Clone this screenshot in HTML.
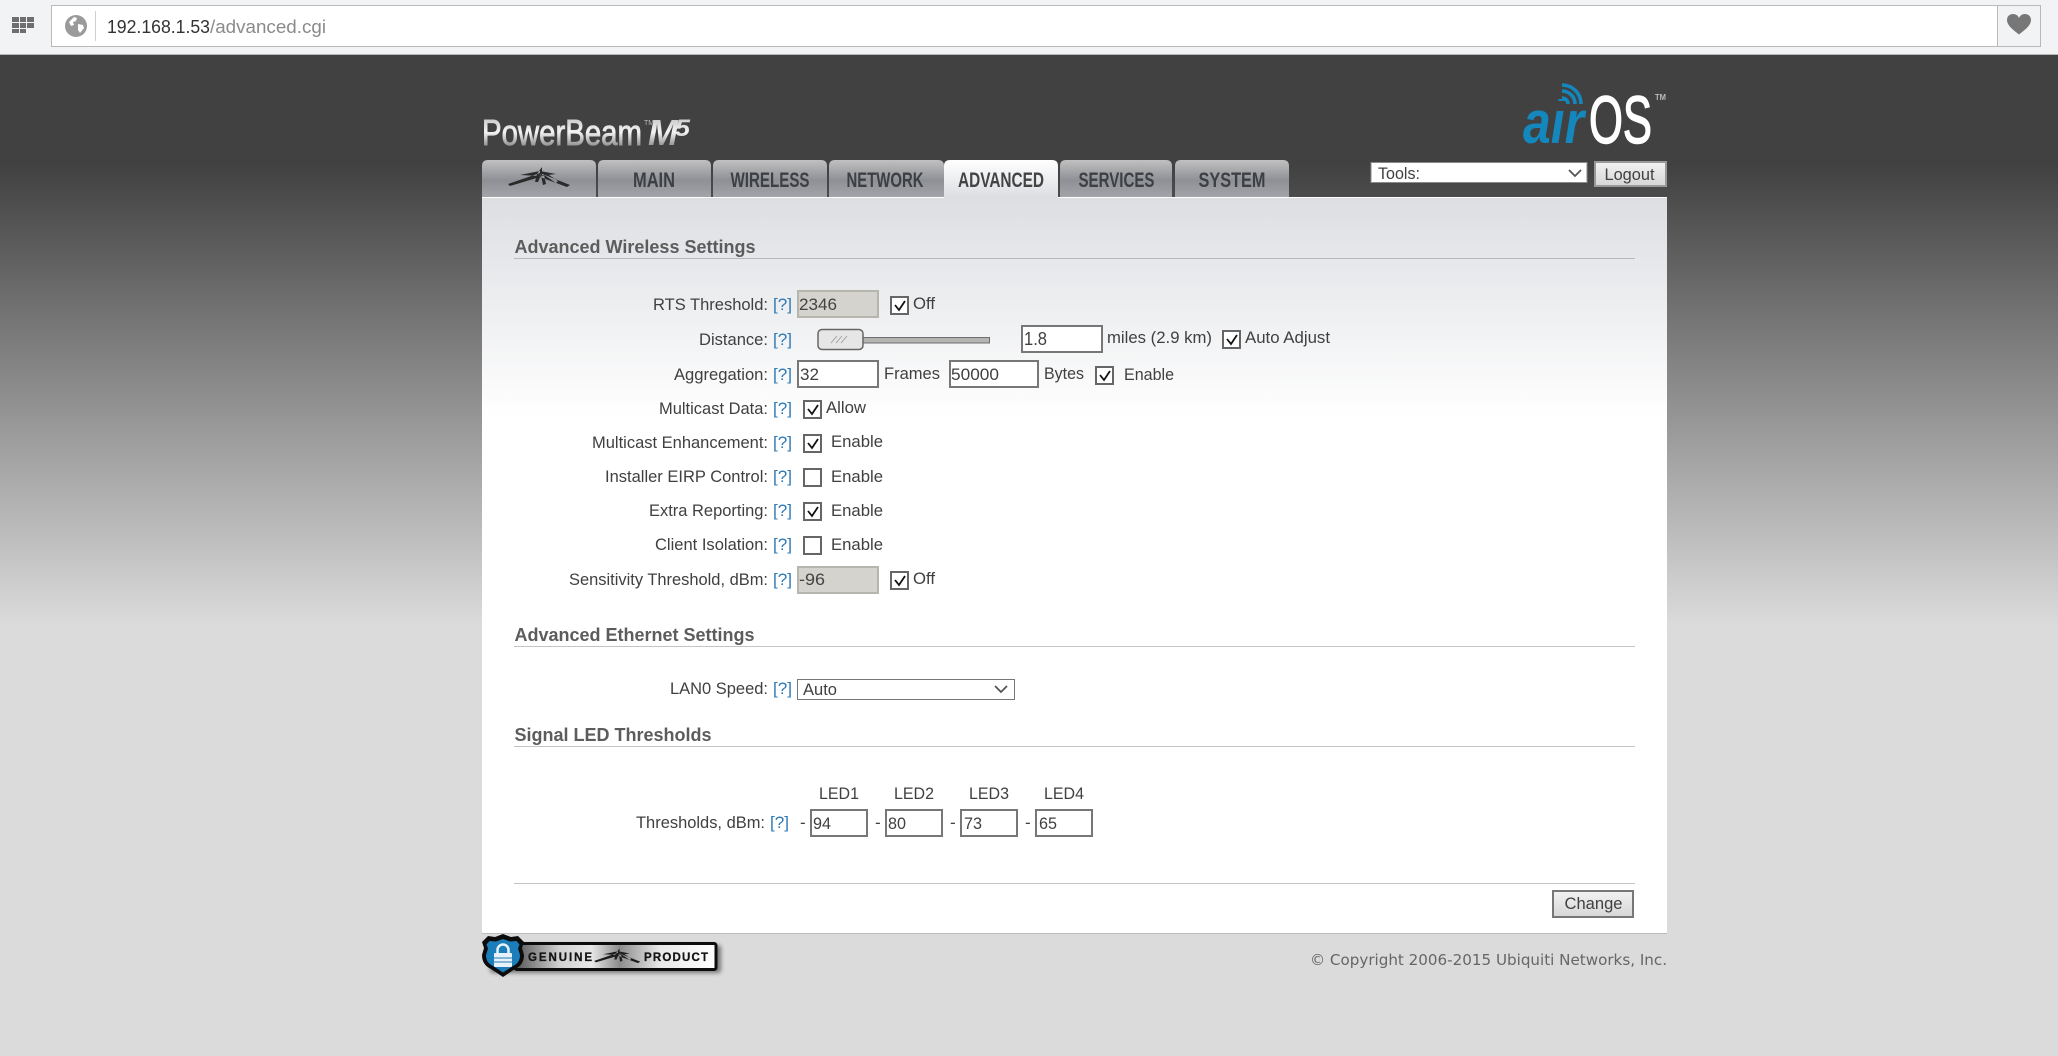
<!DOCTYPE html>
<html lang="en"><head><meta charset="utf-8"><title>advanced.cgi</title>
<style>
html,body{margin:0;padding:0;width:2058px;height:1056px;overflow:hidden;background:#dbdbdb}
svg{display:block}
text{font-family:"Liberation Sans",sans-serif;font-size:17px;fill:#404040}
.h{font-weight:bold;font-size:18px;fill:#5c5c5c}
.q{fill:#2f7ab5}
.t{font-size:21px;font-weight:bold;fill:#3c3f43;text-anchor:middle}
.i{fill:#fff;stroke:#777;stroke-width:2}
.d{fill:#d4d3ce;stroke:#b6b6ae;stroke-width:2}
.c{fill:#fff;stroke:#666;stroke-width:2}
.k{fill:none;stroke:#111;stroke-width:1.800}
.l{stroke:#8a8a8a;stroke-width:1;stroke-dasharray:1 1}
</style></head><body>
<svg xmlns="http://www.w3.org/2000/svg" width="2058" height="1056" viewBox="0 0 2058 1056">
<defs>
<linearGradient id="bg" x1="0" y1="0" x2="0" y2="1"><stop offset="0" stop-color="#414141"/><stop offset=".11" stop-color="#414141"/><stop offset=".57" stop-color="#dbdbdb"/><stop offset="1" stop-color="#dbdbdb"/></linearGradient>
<linearGradient id="pn" x1="0" y1="197" x2="0" y2="933" gradientUnits="userSpaceOnUse"><stop offset="0" stop-color="#dcdee2"/><stop offset=".3" stop-color="#ffffff"/><stop offset="1" stop-color="#ffffff"/></linearGradient>
<linearGradient id="tb" x1="0" y1="0" x2="0" y2="1"><stop offset="0" stop-color="#c0c0c0"/><stop offset=".55" stop-color="#8e9096"/><stop offset="1" stop-color="#a2a4aa"/></linearGradient>
<linearGradient id="ta" x1="0" y1="0" x2="0" y2="1"><stop offset="0" stop-color="#ffffff"/><stop offset="1" stop-color="#dcdee2"/></linearGradient>
<linearGradient id="pb" x1="0" y1="118" x2="0" y2="146" gradientUnits="userSpaceOnUse"><stop offset="0" stop-color="#c8c8c8"/><stop offset=".5" stop-color="#f4f4f4"/><stop offset="1" stop-color="#909090"/></linearGradient>
<linearGradient id="mt" x1="0" y1="0" x2="1" y2="0"><stop offset="0" stop-color="#555"/><stop offset=".22" stop-color="#d0d0d0"/><stop offset=".38" stop-color="#e8e8e8"/><stop offset=".52" stop-color="#8c8c8c"/><stop offset=".72" stop-color="#e8e8e8"/><stop offset="1" stop-color="#fff"/></linearGradient>
<linearGradient id="bt" x1="0" y1="0" x2="0" y2="1"><stop offset="0" stop-color="#f2f2f2"/><stop offset="1" stop-color="#d6d6d6"/></linearGradient>
<filter id="sh" x="-10%" y="-20%" width="120%" height="150%"><feGaussianBlur stdDeviation="2"/></filter>
</defs>

<!-- browser bar -->
<rect width="2058" height="55" fill="#f2f3f5"/>
<rect y="54" width="2058" height="1" fill="#b5b5b5"/>
<g fill="#6e6e6e">
<rect x="12" y="17" width="7" height="5"/><rect x="20" y="17" width="6" height="5"/><rect x="27" y="17" width="7" height="5"/>
<rect x="12" y="23" width="7" height="5"/><rect x="20" y="23" width="6" height="5"/><rect x="27" y="23" width="7" height="5"/>
<rect x="12" y="29" width="7" height="4"/><rect x="20" y="29" width="6" height="4"/>
</g>
<rect x="51.500" y="5.500" width="1989" height="41" fill="#fff" stroke="#b9b9b9"/>
<rect x="1997.500" y="5.500" width="43" height="41" fill="#f2f3f5" stroke="#b9b9b9"/>
<circle cx="76" cy="26" r="11" fill="#9a9a9a"/>
<path d="M69 22l5-5 3 1-1 3-3 1 1 3-3 1zM78 24l5 1 1 3-4 5-2-3z" fill="#fff"/>
<rect x="95" y="11" width="1" height="30" fill="#cfcfcf"/>
<text x="107" y="33" style="font-size:18.500px;fill:#333" textLength="103" lengthAdjust="spacingAndGlyphs">192.168.1.53</text>
<text x="210" y="33" style="font-size:18.500px;fill:#8a8a8a" textLength="116" lengthAdjust="spacingAndGlyphs">/advanced.cgi</text>
<path d="M2019 34.500C2012 29 2007 25 2007 20C2007 16 2010 14 2013 14C2016 14 2018 15.500 2019 18C2020 15.500 2022 14 2025 14C2028 14 2031 16 2031 20C2031 25 2026 29 2019 34.500Z" fill="#777"/>

<!-- page bg -->
<rect y="55" width="2058" height="1001" fill="url(#bg)"/>

<!-- logos -->
<text x="482" y="145" style="font-size:36px;fill:url(#pb);stroke:url(#pb);stroke-width:.9" textLength="160" lengthAdjust="spacingAndGlyphs">PowerBeam</text>
<text x="644" y="125" style="font-size:7px;fill:#bbb">TM</text>
<text x="648" y="145" style="font-size:36px;font-weight:bold;font-style:italic;fill:url(#pb)" textLength="30" lengthAdjust="spacingAndGlyphs">M</text>
<text x="675" y="136" style="font-size:24px;font-weight:bold;font-style:italic;fill:url(#pb)" textLength="15" lengthAdjust="spacingAndGlyphs">5</text>

<text x="1523" y="143" style="font-size:60px;font-style:italic;font-weight:bold;fill:#1487bd" textLength="61" lengthAdjust="spacingAndGlyphs">air</text>
<rect x="1556" y="101" width="14" height="10" fill="#414141"/>
<g fill="none" stroke="#1487bd" stroke-width="3.600">
<path d="M1562 98a6 6 0 0 1 6 6"/><path d="M1562 91a13 13 0 0 1 13 13"/><path d="M1562 85a19 19 0 0 1 19 19"/>
</g>
<text x="1589" y="143" style="font-size:67px;fill:#fff;stroke:#fff;stroke-width:1.500" textLength="63" lengthAdjust="spacingAndGlyphs">OS</text>
<text x="1655" y="100" style="font-size:8px;font-weight:bold;fill:#bdbdbd" textLength="11" lengthAdjust="spacingAndGlyphs">TM</text>

<!-- tabs -->
<g>
<path d="M482 197V166q0-6 6-6h102q6 0 6 6v31z" fill="url(#tb)"/>
<path d="M598 197V166q0-6 6-6h101q6 0 6 6v31z" fill="url(#tb)"/>
<path d="M713 197V166q0-6 6-6h102q6 0 6 6v31z" fill="url(#tb)"/>
<path d="M829 197V166q0-6 6-6h103q6 0 6 6v31z" fill="url(#tb)"/>
<path d="M944 197V166q0-6 6-6h102q6 0 6 6v31z" fill="url(#ta)"/>
<path d="M1060 197V166q0-6 6-6h100q6 0 6 6v31z" fill="url(#tb)"/>
<path d="M1175 197V166q0-6 6-6h102q6 0 6 6v31z" fill="url(#tb)"/>
</g>
<path d="M540 173L508 184L510 186L540 177ZM540 173L570 185L567 187L540 177ZM520 175L540 171L540 176ZM556 174L540 171L540 176ZM542 167L537 174L542 175ZM537 174L535 182L538 182L541 175ZM541 175L543 185L546 184L544 175ZM543 174L556 183L558 181L546 173Z" fill="#2a2a2a"/>
<text class="t" x="654" y="187" textLength="42" lengthAdjust="spacingAndGlyphs">MAIN</text>
<text class="t" x="770" y="187" textLength="79" lengthAdjust="spacingAndGlyphs">WIRELESS</text>
<text class="t" x="885" y="187" textLength="77" lengthAdjust="spacingAndGlyphs">NETWORK</text>
<text class="t" x="1001" y="187" textLength="86" lengthAdjust="spacingAndGlyphs" style="fill:#444">ADVANCED</text>
<text class="t" x="1116.500" y="187" textLength="76" lengthAdjust="spacingAndGlyphs">SERVICES</text>
<text class="t" x="1232" y="187" textLength="67" lengthAdjust="spacingAndGlyphs">SYSTEM</text>

<!-- tools -->
<rect x="1371" y="162.500" width="216" height="20" fill="#fff" stroke="#8a8a8a"/>
<text x="1378" y="179" textLength="42" lengthAdjust="spacingAndGlyphs">Tools:</text>
<path d="M1569 170l6 6 6-6" fill="none" stroke="#555" stroke-width="1.800"/>
<rect x="1595" y="162" width="71" height="24" fill="url(#bt)" stroke="#999" stroke-width="2"/>
<text x="1629.500" y="180" text-anchor="middle" textLength="50" lengthAdjust="spacingAndGlyphs">Logout</text>

<!-- panel -->
<rect x="482" y="197" width="1185" height="736" fill="url(#pn)"/>
<rect x="482" y="197" width="462" height="1" fill="#fff"/><rect x="1058" y="197" width="609" height="1" fill="#fff"/>
<rect x="482" y="933" width="1185" height="1" fill="#bcbcbc"/>

<text class="h" x="514.500" y="253" textLength="241" lengthAdjust="spacingAndGlyphs">Advanced Wireless Settings</text>
<line class="l" x1="514.500" y1="258.500" x2="1635" y2="258.500"/>

<!-- RTS -->
<text x="768" y="310" text-anchor="end" textLength="115" lengthAdjust="spacingAndGlyphs">RTS Threshold:</text>
<text class="q" x="773" y="310" textLength="19" lengthAdjust="spacingAndGlyphs">[?]</text>
<rect class="d" x="798" y="291" width="80" height="26"/>
<text x="799" y="310" style="fill:#444" textLength="38" lengthAdjust="spacingAndGlyphs">2346</text>
<rect class="c" x="891" y="297" width="17" height="17"/><path class="k" d="M895 305l4 5 6-9"/>
<text x="913" y="309" textLength="22" lengthAdjust="spacingAndGlyphs">Off</text>

<!-- Distance -->
<text x="768" y="345" text-anchor="end" textLength="69" lengthAdjust="spacingAndGlyphs">Distance:</text>
<text class="q" x="773" y="345" textLength="19" lengthAdjust="spacingAndGlyphs">[?]</text>
<rect x="860" y="337.500" width="129.500" height="5.500" fill="#b4b5b2" stroke="#6e6e6e"/>
<rect x="818" y="329.500" width="45" height="20" rx="4" fill="#e6e6e6" stroke="#666" stroke-width="1.500"/>
<path d="M831 343l6-7M836 343l6-7M841 343l6-7" stroke="#aaa" stroke-width="1"/>
<rect class="i" x="1022" y="326" width="80" height="26"/>
<text x="1024" y="345" style="font-size:18px" textLength="23" lengthAdjust="spacingAndGlyphs">1.8</text>
<text x="1107" y="343" textLength="105" lengthAdjust="spacingAndGlyphs">miles (2.9 km)</text>
<rect class="c" x="1223" y="331" width="17" height="17"/><path class="k" d="M1227 339l4 5 6-9"/>
<text x="1245" y="343" textLength="85" lengthAdjust="spacingAndGlyphs">Auto Adjust</text>

<!-- Aggregation -->
<text x="768" y="380" text-anchor="end" textLength="94" lengthAdjust="spacingAndGlyphs">Aggregation:</text>
<text class="q" x="773" y="380" textLength="19" lengthAdjust="spacingAndGlyphs">[?]</text>
<rect class="i" x="798" y="361" width="80" height="26"/>
<text x="800" y="380" textLength="19" lengthAdjust="spacingAndGlyphs">32</text>
<text x="884" y="379" textLength="56" lengthAdjust="spacingAndGlyphs">Frames</text>
<rect class="i" x="950" y="361" width="88" height="26"/>
<text x="951" y="380" textLength="48" lengthAdjust="spacingAndGlyphs">50000</text>
<text x="1044" y="379" textLength="40" lengthAdjust="spacingAndGlyphs">Bytes</text>
<rect class="c" x="1096" y="367" width="17" height="17"/><path class="k" d="M1100 375l4 5 6-9"/>
<text x="1124" y="380" textLength="50" lengthAdjust="spacingAndGlyphs">Enable</text>

<!-- Rows -->
<text x="768" y="414" text-anchor="end" textLength="109" lengthAdjust="spacingAndGlyphs">Multicast Data:</text>
<text class="q" x="773" y="414" textLength="19" lengthAdjust="spacingAndGlyphs">[?]</text>
<rect class="c" x="804" y="401" width="17" height="17"/><path class="k" d="M808 409l4 5 6-9"/>
<text x="826" y="413" textLength="40" lengthAdjust="spacingAndGlyphs">Allow</text>

<text x="768" y="448" text-anchor="end" textLength="176" lengthAdjust="spacingAndGlyphs">Multicast Enhancement:</text>
<text class="q" x="773" y="448" textLength="19" lengthAdjust="spacingAndGlyphs">[?]</text>
<rect class="c" x="804" y="435" width="17" height="17"/><path class="k" d="M808 443l4 5 6-9"/>
<text x="831" y="447" textLength="52" lengthAdjust="spacingAndGlyphs">Enable</text>

<text x="768" y="482" text-anchor="end" textLength="163" lengthAdjust="spacingAndGlyphs">Installer EIRP Control:</text>
<text class="q" x="773" y="482" textLength="19" lengthAdjust="spacingAndGlyphs">[?]</text>
<rect class="c" x="804" y="469" width="17" height="17"/>
<text x="831" y="482" textLength="52" lengthAdjust="spacingAndGlyphs">Enable</text>

<text x="768" y="516" text-anchor="end" textLength="119" lengthAdjust="spacingAndGlyphs">Extra Reporting:</text>
<text class="q" x="773" y="516" textLength="19" lengthAdjust="spacingAndGlyphs">[?]</text>
<rect class="c" x="804" y="503" width="17" height="17"/><path class="k" d="M808 511l4 5 6-9"/>
<text x="831" y="516" textLength="52" lengthAdjust="spacingAndGlyphs">Enable</text>

<text x="768" y="550" text-anchor="end" textLength="113" lengthAdjust="spacingAndGlyphs">Client Isolation:</text>
<text class="q" x="773" y="550" textLength="19" lengthAdjust="spacingAndGlyphs">[?]</text>
<rect class="c" x="804" y="537" width="17" height="17"/>
<text x="831" y="550" textLength="52" lengthAdjust="spacingAndGlyphs">Enable</text>

<text x="768" y="585" text-anchor="end" textLength="199" lengthAdjust="spacingAndGlyphs">Sensitivity Threshold, dBm:</text>
<text class="q" x="773" y="585" textLength="19" lengthAdjust="spacingAndGlyphs">[?]</text>
<rect class="d" x="798" y="567" width="80" height="26"/>
<text x="799" y="585" style="fill:#444" textLength="26" lengthAdjust="spacingAndGlyphs">-96</text>
<rect class="c" x="891" y="572" width="17" height="17"/><path class="k" d="M895 580l4 5 6-9"/>
<text x="913" y="584" textLength="22" lengthAdjust="spacingAndGlyphs">Off</text>

<!-- Ethernet -->
<text class="h" x="514.500" y="641" textLength="240" lengthAdjust="spacingAndGlyphs">Advanced Ethernet Settings</text>
<line class="l" x1="514.500" y1="646.500" x2="1635" y2="646.500"/>
<text x="768" y="694" text-anchor="end" textLength="98" lengthAdjust="spacingAndGlyphs">LAN0 Speed:</text>
<text class="q" x="773" y="694" textLength="19" lengthAdjust="spacingAndGlyphs">[?]</text>
<rect x="797.500" y="679.500" width="217" height="20" fill="#fff" stroke="#777"/>
<text x="803" y="695" textLength="34" lengthAdjust="spacingAndGlyphs">Auto</text>
<path d="M995 686l6 6 6-6" fill="none" stroke="#555" stroke-width="1.800"/>

<!-- LED -->
<text class="h" x="514.500" y="741" textLength="197" lengthAdjust="spacingAndGlyphs">Signal LED Thresholds</text>
<line class="l" x1="514.500" y1="746.500" x2="1635" y2="746.500"/>
<text x="839" y="799" text-anchor="middle" textLength="40" lengthAdjust="spacingAndGlyphs">LED1</text>
<text x="914" y="799" text-anchor="middle" textLength="40" lengthAdjust="spacingAndGlyphs">LED2</text>
<text x="989" y="799" text-anchor="middle" textLength="40" lengthAdjust="spacingAndGlyphs">LED3</text>
<text x="1064" y="799" text-anchor="middle" textLength="40" lengthAdjust="spacingAndGlyphs">LED4</text>
<text x="636" y="828" textLength="129" lengthAdjust="spacingAndGlyphs">Thresholds, dBm:</text>
<text class="q" x="770" y="828" textLength="19" lengthAdjust="spacingAndGlyphs">[?]</text>
<text x="800" y="828">-</text><text x="875" y="828">-</text><text x="950" y="828">-</text><text x="1025" y="828">-</text>
<rect class="i" x="811" y="810" width="56" height="26"/><text x="813" y="829" textLength="18" lengthAdjust="spacingAndGlyphs">94</text>
<rect class="i" x="886" y="810" width="56" height="26"/><text x="888" y="829" textLength="18" lengthAdjust="spacingAndGlyphs">80</text>
<rect class="i" x="961" y="810" width="56" height="26"/><text x="964" y="829" textLength="18" lengthAdjust="spacingAndGlyphs">73</text>
<rect class="i" x="1036" y="810" width="56" height="26"/><text x="1039" y="829" textLength="18" lengthAdjust="spacingAndGlyphs">65</text>

<line class="l" x1="514.500" y1="883.500" x2="1635" y2="883.500"/>
<rect x="1553" y="891" width="80" height="26" fill="url(#bt)" stroke="#777" stroke-width="2"/>
<text x="1593.500" y="909" text-anchor="middle" textLength="58" lengthAdjust="spacingAndGlyphs">Change</text>

<!-- footer -->
<text x="1310" y="965" style="font-family:'DejaVu Sans',sans-serif;font-size:15.500px;fill:#666" textLength="357" lengthAdjust="spacingAndGlyphs">© Copyright 2006-2015 Ubiquiti Networks, Inc.</text>

<!-- genuine badge -->
<rect x="490" y="945" width="231" height="28" rx="3" fill="#000" opacity=".45" filter="url(#sh)"/>
<rect x="515" y="943.500" width="201" height="26" rx="2" fill="url(#mt)" stroke="#0c0c0c" stroke-width="3"/>
<path d="M503 934l8 3 7-1 6 6-2 6 2 7q0 10-9 14l-12 8-12-8q-9-4-9-14l2-7-2-6 6-6 7 1z" fill="#0c0c0c"/>
<path d="M503 939l7 2.500 6.500-.5 3 3.500-1.500 4 2 6.500q0 8-7 11l-10 6.500-10-6.500q-7-3-7-11l2-6.500-1.500-4 3-3.500 6.500.5z" fill="#1b7dba"/>
<rect x="494" y="953" width="18" height="14" rx="1" fill="#e8f1f7"/>
<path d="M497.500 953v-3a5.500 5.500 0 0 1 11 0v3" fill="none" stroke="#e8f1f7" stroke-width="2.500"/>
<path d="M494 958h18M494 962h18" stroke="#1b7dba" stroke-width="1"/>
<text x="528" y="961" style="font-size:11.500px;font-weight:bold;fill:#141414;stroke:#141414;stroke-width:.3" textLength="64" lengthAdjust="spacing">GENUINE</text>
<text x="644" y="961" style="font-size:11.500px;font-weight:bold;fill:#141414;stroke:#141414;stroke-width:.3" textLength="64" lengthAdjust="spacing">PRODUCT</text>
<g transform="translate(618 955) scale(.74) translate(-540 -176)"><path d="M540 173L508 184L510 186L540 177ZM540 173L570 185L567 187L540 177ZM520 175L540 171L540 176ZM556 174L540 171L540 176ZM542 167L537 174L542 175ZM537 174L535 182L538 182L541 175ZM541 175L543 185L546 184L544 175ZM543 174L556 183L558 181L546 173Z" fill="#1c1c1c"/></g>
</svg>
</body></html>
